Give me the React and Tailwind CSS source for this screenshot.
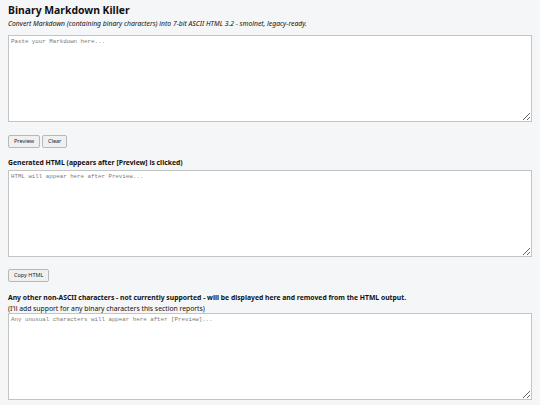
import React, { useState } from 'react';

const font = { fontFamily: '"Noto Sans", "Open Sans", sans-serif' };

const Box = ({ placeholder, value, onChange }) => (
  <textarea
    value={value}
    onChange={onChange}
    placeholder={placeholder}
    className="block w-full h-[87px] bg-white border border-[#c4c4c4] px-[2px] py-[2px] text-[5.8px] leading-[8px] font-['Liberation_Mono',monospace] placeholder:text-[#7a7a7a] resize-y outline-none"
  />
);

const Btn = ({ children, onClick }) => (
  <button
    onClick={onClick}
    className="h-[13px] px-[5px] bg-[#f0f0f0] border border-[#b8b8b8] rounded-[2px] text-[5.5px] leading-none text-[#222]"
  >
    {children}
  </button>
);

export default function App() {
  const [md, setMd] = useState('');
  const [html, setHtml] = useState('');
  const [odd, setOdd] = useState('');

  const preview = () => {
    const bad = [...md].filter((c) => c.charCodeAt(0) > 127);
    setOdd(bad.join(' '));
    setHtml([...md].filter((c) => c.charCodeAt(0) <= 127).join(''));
  };

  return (
    <div style={font} className="min-h-screen bg-[#f5f6f8] px-[8px] pt-[4px] text-[#111]">
      <h1 className="text-[10.4px] font-bold leading-[13px]">Binary Markdown Killer</h1>
      <p className="text-[6.8px] italic font-normal leading-[9px] mt-[2px]">
        Convert Markdown (containing binary characters) into 7-bit ASCII HTML 3.2 - smolnet, legacy-ready.
      </p>
      <div className="mt-[7px]">
        <Box placeholder="Paste your Markdown here..." value={md} onChange={(e) => setMd(e.target.value)} />
      </div>
      <div className="flex gap-[2px] mt-[13px]">
        <Btn onClick={preview}>Preview</Btn>
        <Btn onClick={() => { setMd(''); setHtml(''); setOdd(''); }}>Clear</Btn>
      </div>

      <h2 className="text-[6.8px] font-bold leading-[9px] mt-[10px] mb-[3px]">
        Generated HTML (appears after [Preview] is clicked)
      </h2>
      <Box placeholder="HTML will appear here after Preview..." value={html} onChange={(e) => setHtml(e.target.value)} />
      <div className="flex mt-[12px]">
        <Btn onClick={() => navigator.clipboard?.writeText(html)}>Copy HTML</Btn>
      </div>

      <h2 className="text-[6.8px] font-bold leading-[9px] mt-[11px]">
        Any other non-ASCII characters - not currently supported - will be displayed here and removed from the HTML output.
      </h2>
      <p className="text-[6.8px] leading-[9px] mt-[2px]">(I'll add support for any binary characters this section reports)</p>
      <Box placeholder="Any unusual characters will appear here after [Preview]..." value={odd} onChange={(e) => setOdd(e.target.value)} />
    </div>
  );
}
